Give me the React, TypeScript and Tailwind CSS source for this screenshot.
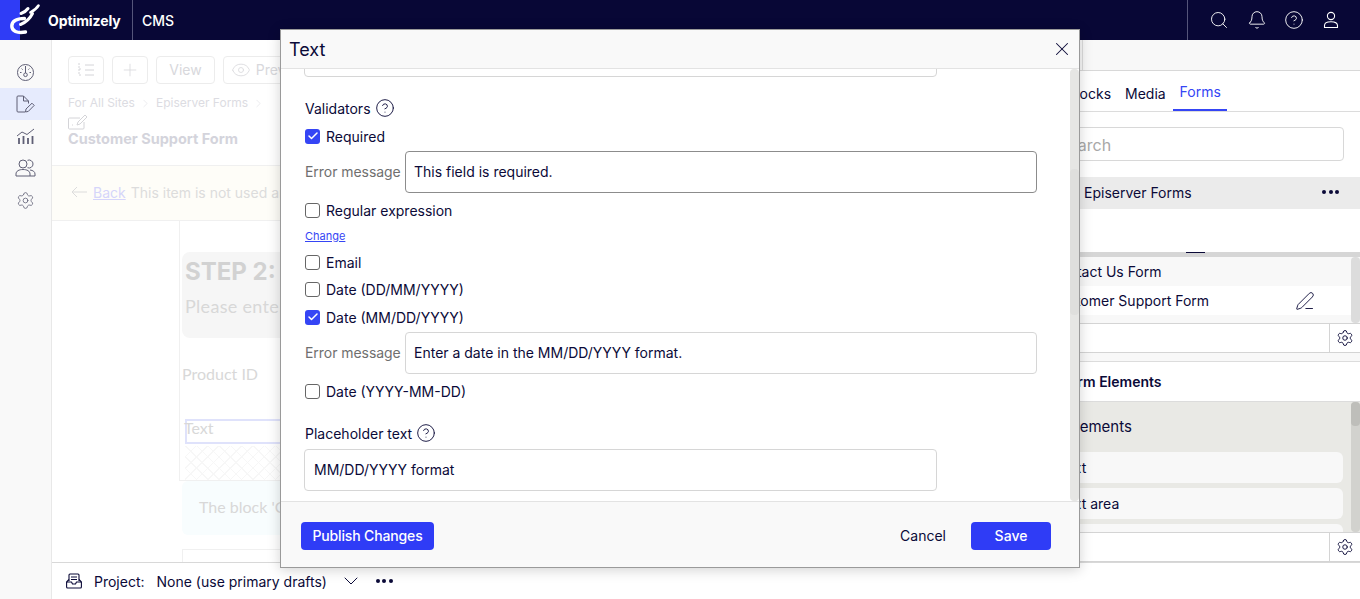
import React from 'react';
import { Search, Bell, CircleHelp, X, Settings, ChevronDown, ChevronRight, Plus, Eye, PenLine, Check } from 'lucide-react';

const Logo = () => (
  <svg width="40" height="40" viewBox="0 0 40 40" fill="none" stroke="#fff" strokeLinecap="round">
    <path d="M24.5 18.5 C15.5 18.5 11.8 22 11.8 26 C11.8 31 17 33.5 25.5 32" strokeWidth="3.4" />
    <path d="M21 13.5 C24 12.5 26.5 10.5 28 8.5" strokeWidth="3" />
    <path d="M20.5 24.5 C25.5 22.5 30 18.5 32.5 13.5" strokeWidth="3" />
    <path d="M30.5 12.5 C34 10.5 37 8 38.5 5.5" strokeWidth="2.6" />
  </svg>
);

const Dots = () => (
  <span className="flex items-center gap-[2.5px]">
    <span className="w-[4px] h-[4px] rounded-full bg-[#0b0a38]" />
    <span className="w-[4px] h-[4px] rounded-full bg-[#0b0a38]" />
    <span className="w-[4px] h-[4px] rounded-full bg-[#0b0a38]" />
  </span>
);

const UserIcon = () => (
  <svg width="18" height="18" viewBox="0 0 18 18" fill="none" stroke="currentColor" strokeWidth="1.1">
    <circle cx="9" cy="5" r="3.6" />
    <path d="M2.5 16.5 V14.5 C2.5 12 5 10.8 9 10.8 C13 10.8 15.5 12 15.5 14.5 V16.5 Z" strokeLinejoin="round" />
  </svg>
);

const GaugeIcon = () => (
  <svg width="19" height="19" viewBox="0 0 19 19" fill="none" stroke="currentColor" strokeWidth="1">
    <circle cx="9.5" cy="9.5" r="8" />
    <path d="M9.5 3 V10" />
    <circle cx="9.5" cy="11.8" r="1.8" />
    <path d="M4 9.5 H5.5 M13.5 9.5 H15 M5.6 5.6 L6.6 6.6 M13.4 5.6 L12.4 6.6" />
  </svg>
);

const FilePenIcon = () => (
  <svg width="19" height="18" viewBox="0 0 19 18" fill="none" stroke="currentColor" strokeWidth="1" strokeLinejoin="round">
    <path d="M9 17 H2 A1 1 0 0 1 1 16 V2 A1 1 0 0 1 2 1 H7.5 L12.5 6 V8.5" />
    <path d="M7.5 1 V6 H12.5" />
    <path d="M9.5 17 L10 14 L16 8.2 L18.2 10.4 L12.3 16.4 Z" />
  </svg>
);

const ChartIcon = () => (
  <svg width="19" height="16" viewBox="0 0 19 16" fill="none" stroke="currentColor">
    <path d="M3 10 V16 M7.5 8 V16 M12 10 V16 M16.5 8 V16" strokeWidth="1.8" />
    <path d="M1 8 L6 4 L11 6.5 L18 1" strokeWidth="1" />
  </svg>
);

const UsersIcon = () => (
  <svg width="21" height="18" viewBox="0 0 21 18" fill="none" stroke="currentColor" strokeWidth="1" strokeLinejoin="round">
    <circle cx="8" cy="5" r="4" />
    <path d="M1 17 V15 C1 12 4 10.5 8 10.5 C12 10.5 15 12 15 15 V17 Z" />
    <path d="M12.5 1.3 A4 4 0 1 1 12.5 8.7" />
    <path d="M15 11 C18 11.3 20 12.8 20 15 V17 H15" />
  </svg>
);

const TreeIcon = () => (
  <svg width="18" height="16" viewBox="0 0 18 16" fill="none" stroke="#d4d4d8" strokeWidth="1">
    <path d="M2 1 V13 H5 M2 7 H5" strokeDasharray="2 1" />
    <path d="M8 3 H17 M8 8 H17 M8 13 H17" />
  </svg>
);

const EditBoxIcon = () => (
  <svg width="20" height="16" viewBox="0 0 20 16" fill="none" stroke="#d4d4d8" strokeWidth="1">
    <path d="M12 4 H1.5 A1 1 0 0 0 .5 5 V14 A1 1 0 0 0 1.5 15 H15 A1 1 0 0 0 16 14 V8" />
    <path d="M9 11 L10 8 L17 1 L19 3 L12 10 Z" />
    <path d="M4 11 H6" strokeDasharray="1 1" />
  </svg>
);

const BackArrow = () => (
  <svg width="16" height="12" viewBox="0 0 16 12" fill="none" stroke="#dcdcdc" strokeWidth="1">
    <path d="M16 6 H1 M6 1 L1 6 L6 11" />
  </svg>
);

const TrayIcon = () => (
  <svg width="16" height="16" viewBox="0 0 16 16" fill="none" stroke="#0b0a38" strokeWidth="1.1" strokeLinejoin="round">
    <path d="M3 8 V2 A1 1 0 0 1 4 1 H12 A1 1 0 0 1 13 2 V8" />
    <path d="M.6 9 L3 6.5 M15.4 9 L13 6.5" />
    <path d="M.6 9 H5.5 L6.5 11 H9.5 L10.5 9 H15.4 V14 A1 1 0 0 1 14.4 15 H1.6 A1 1 0 0 1 .6 14 Z" />
    <path d="M5 4 H11 M5 6.5 H11" />
  </svg>
);

const CheckRow = ({ label, checked }: { label: string; checked?: boolean }) => (
  <label className="flex items-center gap-[6px] h-[20px] text-[14px] text-[#0b0a38]">
    {checked ? (
      <span className="w-[15px] h-[15px] rounded-[3px] bg-[#3545f5] flex items-center justify-center">
        <Check size={12} color="#fff" strokeWidth={3} />
      </span>
    ) : (
      <span className="w-[15px] h-[15px] rounded-[3px] border border-[#666] bg-white" />
    )}
    {label}
  </label>
);

const ErrorRow = ({ value, dark }: { value: string; dark?: boolean }) => (
  <div className="flex items-center gap-[5px]">
    <span className="w-[95px] shrink-0 pb-[2px] whitespace-nowrap text-[14px] tracking-[-0.05px] text-[#6f6f6f]">Error message</span>
    <div className={`w-[632px] h-[42px] rounded-[4px] border flex items-center px-2 pb-[2px] text-[14px] text-[#0b0a38] ${dark ? 'border-[#8c8c8c]' : 'border-[#d6d6d6]'}`}>
      {value}
    </div>
  </div>
);

const HelpLabel = ({ label }: { label: string }) => (
  <div className="flex items-center gap-[4px] h-[20px] text-[14px] text-[#0b0a38]">
    {label}
    <CircleHelp size={20} strokeWidth={1.1} />
  </div>
);

const Modal = () => (
  <div className="absolute left-[280px] top-[29px] w-[800px] h-[539px] border border-[#9a9a9a] bg-white flex flex-col shadow-[0_2px_12px_rgba(0,0,0,0.18)]">
    <div className="h-[39px] shrink-0 flex items-center justify-between pl-[8px] pr-[6px] bg-[#f9f9f9] border-b border-[#e3e3e3]">
      <span className="text-[18px] text-[#0b0a38]">Text</span>
      <X size={22} strokeWidth={1.1} color="#0b0a38" />
    </div>
    <div className="flex-1 flex overflow-hidden">
      <div className="flex-1 overflow-hidden pl-[24px]">
        <div className="w-[633px] h-[42px] -mt-[34px] -ml-px rounded-[4px] border border-[#d6d6d6]" />
        <div className="mt-[21px]"><HelpLabel label="Validators" /></div>
        <div className="mt-[8px]"><CheckRow label="Required" checked /></div>
        <div className="mt-[5px]"><ErrorRow value="This field is required." dark /></div>
        <div className="mt-[7px]"><CheckRow label="Regular expression" /></div>
        <a className="block mt-[8px] h-[16px] leading-[16px] text-[11px] text-[#3545f5] underline">Change</a>
        <div className="mt-[8px]"><CheckRow label="Email" /></div>
        <div className="mt-[7px]"><CheckRow label="Date (DD/MM/YYYY)" /></div>
        <div className="mt-[8px]"><CheckRow label="Date (MM/DD/YYYY)" checked /></div>
        <div className="mt-[5px]"><ErrorRow value="Enter a date in the MM/DD/YYYY format." /></div>
        <div className="mt-[7px]"><CheckRow label="Date (YYYY-MM-DD)" /></div>
        <div className="mt-[22px]"><HelpLabel label="Placeholder text" /></div>
        <div className="mt-[6px] -ml-px w-[633px] h-[42px] rounded-[4px] border border-[#d6d6d6] flex items-center px-[9px] pb-[2px] text-[14px] text-[#0b0a38]">
          MM/DD/YYYY format
        </div>
      </div>
      <div className="w-[9px] bg-[#e6e6e4] rounded-[4px] flex flex-col pt-[100px]">
        <div className="h-[146px] bg-[#dfdfdd] rounded-[4px]" />
      </div>
    </div>
    <div className="h-[66px] shrink-0 flex items-center justify-between pl-[20px] pr-[28px] pt-[2px] bg-[#f9f9f9] border-t border-[#e3e3e3]">
      <button className="h-[28px] w-[133px] rounded-[4px] bg-[#2f3cf6] text-white text-[14px] tracking-[-0.14px] font-medium">Publish Changes</button>
      <div className="flex items-center gap-[25px]">
        <span className="text-[14px] text-[#0b0a38]">Cancel</span>
        <button className="h-[28px] w-[80px] rounded-[4px] bg-[#2f3cf6] text-white text-[14px] font-medium">Save</button>
      </div>
    </div>
  </div>
);

const ToolButton = ({ children, w }: { children: React.ReactNode; w: string }) => (
  <div className={`h-[28px] ${w} rounded-[4px] border border-[#ececec] flex items-center justify-center gap-[5px] pb-[1px] text-[14px] text-[#d8d8dc]`}>
    {children}
  </div>
);

const LeftContent = () => (
  <div className="w-[948px] flex flex-col">
    <div className="h-[125px] pl-[16px] pt-[16px] shrink-0">
      <div className="flex gap-[8px]">
        <ToolButton w="w-[36px]"><TreeIcon /></ToolButton>
        <ToolButton w="w-[36px]"><Plus size={20} strokeWidth={1} /></ToolButton>
        <ToolButton w="w-[59px]">View</ToolButton>
        <ToolButton w="w-[93px]"><Eye size={20} strokeWidth={1} />Preview</ToolButton>
      </div>
      <div className="mt-[11px] flex items-center gap-[4px] text-[12px] leading-[16px] text-[#dcdce2]">
        For All Sites <ChevronRight size={13} strokeWidth={1} /> Episerver Forms <ChevronRight size={13} strokeWidth={1} />
      </div>
      <div className="mt-[3px]"><EditBoxIcon /></div>
      <div className="text-[14.5px] font-bold leading-[18px] text-[#d4d4dc]">Customer Support Form</div>
    </div>
    <div className="h-[56px] shrink-0 border-y border-[#f0f0f0] bg-[#fefdf8] flex items-center pl-[19px] pb-[2px] gap-[6px] text-[14px] text-[#dcdcdc]">
      <BackArrow />
      <span className="text-[#d5d5fa] underline -mr-px">Back</span>
      This item is not used anywhere.
    </div>
    <div className="flex-1 overflow-hidden pl-[127px]">
      <div className="h-[260px] border-l border-b border-[#f0f0f0] pl-[2px] pt-[31px]">
        <div className="h-[86px] rounded-[8px] bg-[#f6f6f6] px-[3px] pt-[5px]">
          <div className="text-[24px] font-bold leading-[30px] text-[#d2d2d2]">STEP 2:</div>
          <div className="mt-[6px] font-['Lato',sans-serif] text-[18px] tracking-[0.3px] text-[#d8d8d8]">Please enter</div>
        </div>
        <div className="mt-[26px] font-['Lato',sans-serif] text-[16px] leading-[20px] text-[#d8d8d8]">Product ID</div>
        <div className="mt-[35px] ml-[3px] h-[25px] border-2 border-[#dfe2fb] font-['Lato',sans-serif] text-[16px] leading-[14px] text-[#d8d8d8]">
          <span className="-ml-[3px]">Text</span>
        </div>
        <div className="mt-[2px] ml-[3px] h-[34px] bg-[repeating-linear-gradient(45deg,#f7f7f7_0,#f7f7f7_1px,transparent_1px,transparent_8px),repeating-linear-gradient(-45deg,#f7f7f7_0,#f7f7f7_1px,transparent_1px,transparent_8px)]" />
      </div>
      <div className="ml-[3px] h-[54px] rounded-[6px] bg-[#f8fdfe] flex items-center pl-[17px] pb-[2px] font-['Lato',sans-serif] text-[16px] text-[#d8d8d8]">The block 'Customer'</div>
      <div className="ml-[3px] mt-[14px] h-[40px] border border-[#f0f0f0]" />
    </div>
  </div>
);

const ListRow = ({ label, bg, pencil }: { label: string; bg: string; pencil?: boolean }) => (
  <div className={`h-[29px] flex items-center justify-between pl-[50px] pr-[36px] text-[14px] text-[#0b0a38] ${bg}`}>
    {label}
    {pencil && <PenLine size={20} strokeWidth={1.1} />}
  </div>
);

const GearRow = () => (
  <div className="h-[30px] shrink-0 bg-white border-y border-[#d4d4d4] flex justify-end">
    <div className="w-[31px] border-l border-[#d4d4d4] flex items-center justify-center">
      <Settings size={18} strokeWidth={1.25} color="#0b0a38" />
    </div>
  </div>
);

const RightPanel = () => (
  <div className="w-[360px] flex flex-col text-[#0b0a38]">
    <div className="h-[31px] shrink-0 bg-[#f8f8f8] border-b border-[#d8d8d8] pl-[82px]">
      <div className="w-px h-full bg-[#dcdcdc]" />
    </div>
    <div className="h-[41px] shrink-0 border-b border-[#dcdcdc] flex items-end pl-[67px] text-[14px]">
      <span className="h-[40px] leading-[46px] mr-[14px]">Blocks</span>
      <span className="h-[40px] leading-[46px] mr-[7px]">Media</span>
      <span className="h-[41px] w-[54px] pl-[1px] text-center leading-[44px] text-[#3545f5] border-b-2 border-[#3545f5]">Forms</span>
    </div>
    <div className="h-[65px] shrink-0 pt-[15px] pl-[16px] pr-[16px]">
      <div className="h-[34px] rounded-[4px] border border-[#d8d8d8] flex items-center pl-[16px] pt-[2px] text-[16px] text-[#a8a8a8]">
        <span className="ml-[25px]">Search</span>
      </div>
    </div>
    <div className="h-[32px] shrink-0 bg-[#ebebeb] flex items-center justify-between pl-[84px] pr-[21px] pb-[2px] text-[14px]">
      Episerver Forms
      <Dots />
    </div>
    <div className="h-[43px] shrink-0" />
    <div className="h-[5px] shrink-0 bg-[#d6d6d6] flex justify-center">
      <div className="w-[19px] h-[1px] bg-[#0b0a38] ml-[30px]" />
    </div>
    <div className="h-[66px] shrink-0 flex bg-[#f8f8f8]">
      <div className="flex-1">
        <ListRow label="Contact Us Form" bg="bg-[#f8f8f8]" />
        <ListRow label="Customer Support Form" bg="bg-white" pencil />
      </div>
      <div className="w-[9px] bg-[#dcdcdc] rounded-[4px]" />
    </div>
    <GearRow />
    <div className="h-[8px] shrink-0 bg-[#f8f8f8]" />
    <div className="h-[41px] shrink-0 border-t border-b border-[#dcdcdc] flex items-center pl-[61px] text-[14px] font-semibold">Form Elements</div>
    <div className="h-[130px] shrink-0 flex bg-[#e9e9e5] overflow-hidden">
      <div className="flex-1 pl-[20px] pr-[8px] overflow-hidden">
        <div className="h-[50px] flex items-center pl-[47px] text-[15px]">Elements</div>
        <div className="h-[31px] rounded-[6px] bg-[#f8f8f8] flex items-center pl-[38px] text-[14px]">Text</div>
        <div className="mt-[5px] h-[31px] rounded-[6px] bg-[#f8f8f8] flex items-center pl-[38px] text-[14px]">Text area</div>
        <div className="mt-[5px] h-[31px] rounded-[6px] bg-[#f8f8f8]" />
      </div>
      <div className="w-[9px] bg-[#d2d2ce] rounded-[4px]">
        <div className="h-[24px] bg-[#bebeba] rounded-[4px]" />
      </div>
    </div>
    <GearRow />
  </div>
);

const SideItem = ({ children, active }: { children: React.ReactNode; active?: boolean }) => (
  <div className={`h-[32px] flex items-center justify-center ${active ? 'bg-[#e6ebfd]' : ''}`}>{children}</div>
);

export default function App() {
  return (
    <div className="relative w-[1360px] h-[599px] overflow-hidden bg-white font-['Inter',sans-serif]">
      <header className="h-[40px] bg-[#080736] flex items-center text-white">
        <div className="relative w-[133px] h-full border-r border-[#55557a] flex items-center">
          <div className="w-[20px] h-full bg-[#2f3cf6]" />
          <div className="absolute left-0 top-0"><Logo /></div>
          <span className="ml-[28px] text-[14px] font-bold tracking-[-0.1px]">Optimizely</span>
        </div>
        <span className="ml-[9px] text-[14px] font-medium">CMS</span>
        <div className="ml-auto w-[173px] h-full border-l border-[#55557a] flex items-center gap-[17.5px] pl-[21px]">
          <Search size={20} strokeWidth={1.1} />
          <Bell size={20} strokeWidth={1.1} />
          <CircleHelp size={20} strokeWidth={1.1} />
          <UserIcon />
        </div>
      </header>
      <div className="flex h-[559px]">
        <aside className="w-[52px] shrink-0 bg-[#f9f9f9] border-r border-[#e8e8e8] pt-[16px] flex flex-col text-[#5f5f75]">
          <SideItem><GaugeIcon /></SideItem>
          <SideItem active><FilePenIcon /></SideItem>
          <SideItem><ChartIcon /></SideItem>
          <SideItem><UsersIcon /></SideItem>
          <SideItem><Settings size={19} strokeWidth={1} /></SideItem>
        </aside>
        <div className="flex-1 flex flex-col">
          <div className="h-[522px] flex overflow-hidden">
            <LeftContent />
            <RightPanel />
          </div>
          <footer className="flex-1 border-t border-[#d8d8d8] bg-white flex items-center pl-[14px] text-[14px] text-[#0b0a38]">
            <TrayIcon />
            <span className="ml-[12px]">Project:</span>
            <span className="ml-[12px]">None (use primary drafts)</span>
            <ChevronDown size={24} strokeWidth={1} className="ml-[12px]" />
            <span className="ml-[13px]"><Dots /></span>
          </footer>
        </div>
      </div>
      <Modal />
    </div>
  );
}
